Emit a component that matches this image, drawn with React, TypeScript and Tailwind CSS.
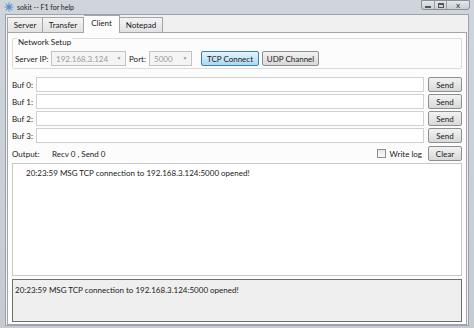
import React from 'react'

const font = { fontFamily: 'Lato, "Noto Sans", sans-serif' }

function Btn({ label, className = '' }: { label: string; className?: string }) {
  return (
    <div
      className={`h-[15px] flex items-center justify-center border border-[#8e8f8f] rounded-[2px] bg-gradient-to-b from-[#f2f2f2] to-[#d9d9d9] text-[8px] text-[#1a1a1a] whitespace-nowrap ${className}`}
    >
      {label}
    </div>
  )
}

function Combo({ value, width }: { value: string; width: string }) {
  return (
    <div className={`h-[15px] ${width} flex items-center border border-[#c3c3c3] bg-[#f4f4f4] text-[8px] text-[#9a9a9a]`}>
      <span className="pl-[4px] flex-1 whitespace-nowrap">{value}</span>
      <span className="w-[12px] text-center text-[5px] text-[#9a9a9a]">▼</span>
    </div>
  )
}

function BufRow({ n }: { n: number }) {
  return (
    <div className="flex items-center h-[15px] mb-[2px]">
      <span className="w-[24px] text-[8px] text-[#1a1a1a] whitespace-nowrap">Buf {n}:</span>
      <div className="flex-1 h-[15px] border border-[#d0d0d0] bg-white" />
      <Btn label="Send" className="w-[34px] ml-[4px]" />
    </div>
  )
}

export default function App() {
  return (
    <div className="w-[474px] h-[328px] overflow-hidden bg-gradient-to-b from-[#cfd5db] to-[#c5cbd1] flex flex-col text-[#1a1a1a]" style={font}>
      {/* title bar */}
      <div className="h-[14px] flex items-center pl-[4px] pr-[4px]">
        <svg width="10" height="10" viewBox="0 0 10 10" className="mr-[3px]">
          <circle cx="5" cy="5" r="2" fill="#6fa8dc" />
          {[0, 45, 90, 135].map((a) => (
            <line key={a} x1="5" y1="0.5" x2="5" y2="9.5" stroke="#5b8fc7" strokeWidth="1" transform={`rotate(${a} 5 5)`} />
          ))}
        </svg>
        <span className="text-[7px]">sokit -- F1 for help</span>
        <div className="flex-1" />
        <div className="flex items-center h-[10px] -mt-[4px] border border-[#8a9098] rounded-b-[3px] bg-gradient-to-b from-[#e3e7eb] to-[#c8ced4]">
          <div className="w-[13px] h-full flex items-center justify-center border-r border-[#9aa0a8]">
            <div className="w-[6px] h-[2px] bg-[#555] mt-[3px]" />
          </div>
          <div className="w-[12px] h-full flex items-center justify-center border-r border-[#9aa0a8]">
            <div className="w-[6px] h-[5px] border border-[#555] border-t-2" />
          </div>
          <div className="w-[22px] h-full flex items-center justify-center text-[8px] font-bold text-[#555]">x</div>
        </div>
      </div>

      {/* client area */}
      <div className="flex-1 mx-[5px] mb-[2px] bg-[#f0f0f0] border border-[#9aa3ad] flex flex-col">
        {/* tabs */}
        <div className="flex items-end h-[17px] pl-[1px] relative z-10">
          <div className="h-[15px] w-[36px] flex items-center justify-center border border-[#a5a5a5] border-b-0 bg-gradient-to-b from-[#f4f4f4] to-[#e2e2e2] text-[8px]">Server</div>
          <div className="h-[15px] w-[41px] flex items-center justify-center border border-[#a5a5a5] border-b-0 border-l-0 bg-gradient-to-b from-[#f4f4f4] to-[#e2e2e2] text-[8px]">Transfer</div>
          <div className="h-[18px] w-[36px] -mb-[1px] flex items-center justify-center border border-[#a5a5a5] border-b-0 border-l-0 bg-[#fcfcfc] text-[8px] pb-[3px]">Client</div>
          <div className="h-[15px] w-[43px] flex items-center justify-center border border-[#a5a5a5] border-b-0 border-l-0 bg-gradient-to-b from-[#f4f4f4] to-[#e2e2e2] text-[8px]">Notepad</div>
        </div>
        <div className="flex-1 mx-[1px] border border-[#a5a5a5] bg-[#fcfcfc] flex flex-col px-[4px] pt-[5px] pb-[2px]">
          {/* network setup */}
          <div className="h-[31px] border border-[#dcdcdc] rounded-[2px] px-[2px] relative">
            <span className="absolute -top-[1px] left-[4px] text-[8px] leading-none bg-[#fcfcfc] px-[1px]">Network Setup</span>
            <div className="flex items-center h-[15px] mt-[12px]">
              <span className="w-[36px] text-[8px] whitespace-nowrap">Server IP:</span>
              <Combo value="192.168.3.124" width="w-[75px]" />
              <span className="w-[23px] pl-[3px] text-[8px]">Port:</span>
              <Combo value="5000" width="w-[43px]" />
              <div className="w-[9px]" />
              <div className="h-[15px] w-[58px] flex items-center justify-center border border-[#3c7fb1] rounded-[2px] bg-gradient-to-b from-[#e5f4fc] to-[#a9d9f2] text-[8px] whitespace-nowrap">TCP Connect</div>
              <Btn label="UDP Channel" className="w-[57px] ml-[3px]" />
            </div>
          </div>

          {/* buffers */}
          <div className="mt-[8px]">
            <BufRow n={0} />
            <BufRow n={1} />
            <BufRow n={2} />
            <BufRow n={3} />
          </div>

          {/* output header */}
          <div className="flex items-center h-[15px] mt-[1px]">
            <span className="text-[8px] w-[40px]">Output:</span>
            <span className="text-[8px]">Recv 0 , Send 0</span>
            <div className="flex-1" />
            <div className="w-[9px] h-[9px] border border-[#8e8f8f] bg-gradient-to-b from-[#e8e8e8] to-[#fafafa] mr-[4px]" />
            <span className="text-[8px]">Write log</span>
            <Btn label="Clear" className="w-[34px] ml-[6px]" />
          </div>

          {/* output log */}
          <div className="flex-1 mt-[2px] border border-[#c8c8c8] bg-white px-[13px] pt-[3px]">
            <div className="text-[8px]">20:23:59 MSG TCP connection to 192.168.3.124:5000 opened!</div>
          </div>

          {/* status box */}
          <div className="h-[43px] mt-[3px] border border-[#6e6e6e] bg-[#efefef] px-[2px] pt-[4px]">
            <div className="text-[8px]">20:23:59 MSG TCP connection to 192.168.3.124:5000 opened!</div>
          </div>
        </div>
      </div>
    </div>
  )
}
